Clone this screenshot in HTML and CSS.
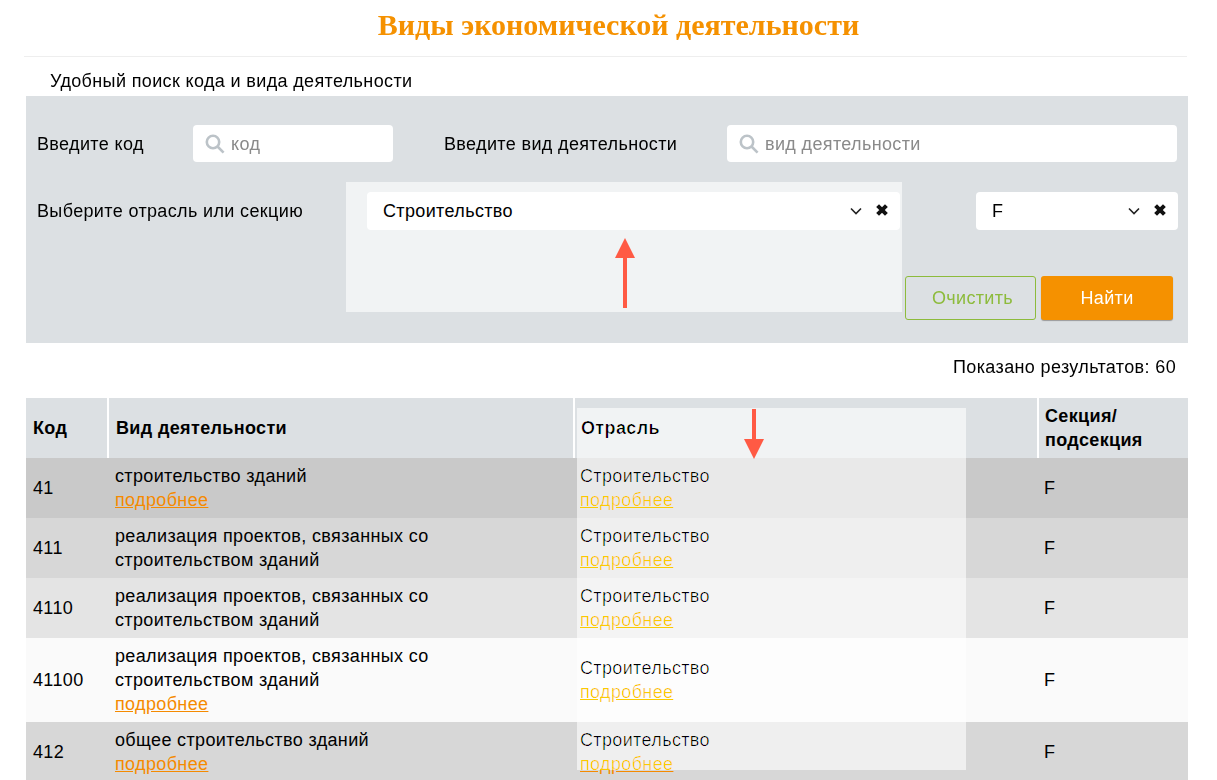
FILE: index.html
```html
<!DOCTYPE html>
<html lang="ru">

<head>
    <meta charset="UTF-8">
    <meta name="viewport" content="width=device-width, initial-scale=1.0">
    <title>Виды экономической деятельности</title>
    <link rel="stylesheet" href="styles.css">
</head>

<body>
    <div class="page">
        <h1>Виды экономической деятельности</h1>
        <hr>
        <p class="intro">Удобный поиск кода и вида деятельности</p>

        <div class="search">
            <div class="search-row">
                <label class="label label-code">Введите код</label>
                <div class="field field-code">
                    <svg class="icon-search" viewBox="0 0 20 20"><circle cx="8" cy="8" r="6.2"/><path d="M12.5 12.5L18.6 18.6"/></svg>
                    <input type="text" placeholder="код">
                </div>
                <label class="label label-kind">Введите вид деятельности</label>
                <div class="field field-kind">
                    <svg class="icon-search" viewBox="0 0 20 20"><circle cx="8" cy="8" r="6.2"/><path d="M12.5 12.5L18.6 18.6"/></svg>
                    <input type="text" placeholder="вид деятельности">
                </div>
            </div>

            <div class="search-row select-row">
                <label class="label label-branch">Выберите отрасль или секцию</label>
                <div class="select select-branch">
                    <span class="select-value">Строительство</span>
                    <svg class="icon-chevron" viewBox="0 0 12 8"><path d="M1 1.5L6 6.5L11 1.5"/></svg>
                    <svg class="icon-clear" viewBox="0 0 14 14"><path d="M2.6 2.6L11.4 11.4M11.4 2.6L2.6 11.4"/></svg>
                </div>
                <div class="select select-section">
                    <span class="select-value">F</span>
                    <svg class="icon-chevron" viewBox="0 0 12 8"><path d="M1 1.5L6 6.5L11 1.5"/></svg>
                    <svg class="icon-clear" viewBox="0 0 14 14"><path d="M2.6 2.6L11.4 11.4M11.4 2.6L2.6 11.4"/></svg>
                </div>
            </div>

            <div class="buttons">
                <button class="btn btn-clear">Очистить</button>
                <button class="btn btn-find">Найти</button>
            </div>

            <!-- annotation over the screenshot -->
            <div class="spot spot-search"></div>
            <svg class="arrow arrow-up" viewBox="0 0 20 70"><path d="M10 70V20"/><polygon points="10,0 20,20 0,20"/></svg>
        </div>

        <p class="results">Показано результатов: 60</p>

        <div class="table-wrap">
            <table>
                <colgroup>
                    <col class="col-code">
                    <col class="col-kind">
                    <col class="col-branch">
                    <col class="col-section">
                </colgroup>
                <thead>
                    <tr>
                        <th>Код</th>
                        <th class="th-kind">Вид деятельности</th>
                        <th class="th-branch">Отрасль</th>
                        <th class="th-section">Секция/<br>подсекция</th>
                    </tr>
                </thead>
                <tbody>
                    <tr class="row-a">
                        <td>41</td>
                        <td>строительство зданий<br><a href="#">подробнее</a></td>
                        <td>Строительство<br><a href="#">подробнее</a></td>
                        <td>F</td>
                    </tr>
                    <tr class="row-b">
                        <td>411</td>
                        <td>реализация проектов, связанных со<br>строительством зданий</td>
                        <td>Строительство<br><a href="#">подробнее</a></td>
                        <td>F</td>
                    </tr>
                    <tr class="row-c">
                        <td>4110</td>
                        <td>реализация проектов, связанных со<br>строительством зданий</td>
                        <td>Строительство<br><a href="#">подробнее</a></td>
                        <td>F</td>
                    </tr>
                    <tr class="row-d">
                        <td>41100</td>
                        <td>реализация проектов, связанных со<br>строительством зданий<br><a href="#">подробнее</a></td>
                        <td>Строительство<br><a href="#">подробнее</a></td>
                        <td>F</td>
                    </tr>
                    <tr class="row-b">
                        <td>412</td>
                        <td>общее строительство зданий<br><a href="#">подробнее</a></td>
                        <td>Строительство<br><a href="#">подробнее</a></td>
                        <td>F</td>
                    </tr>
                </tbody>
            </table>

            <div class="spot spot-table"></div>
            <svg class="arrow arrow-down" viewBox="0 0 20 50"><path d="M10 0V30"/><polygon points="10,50 20,30 0,30"/></svg>
        </div>
    </div>
</body>

</html>
```

FILE: styles.css
```css
html,
body {
    margin: 0;
    height: 780px;
    overflow: hidden;
    background: white;
}

body {
    font-family: "Liberation Sans", Arial, sans-serif;
    font-size: 18px;
    line-height: 24px;
    letter-spacing: 0.36px;
    color: black;
}

.page {
    width: 1162px;
    margin-left: 26px;
}

h1 {
    margin: 0;
    height: 56px;
    padding-left: 23px;
    box-sizing: border-box;
    font-family: "Liberation Serif", "Times New Roman", serif;
    font-size: 30px;
    line-height: 50px;
    font-weight: bold;
    letter-spacing: 0;
    text-align: center;
    color: #f59100;
}

hr {
    height: 1px;
    margin: 0 1px 0 -2px;
    border: 0;
    background: #eeeeee;
}

.intro {
    margin: 0;
    height: 39px;
    padding: 12px 0 0 24px;
    box-sizing: border-box;
}

/* search panel */
.search {
    position: relative;
    height: 247px;
    padding: 29px 10px 0 11px;
    box-sizing: border-box;
    background: #dce0e3;
}

.search-row {
    display: flex;
    align-items: center;
}

.select-row {
    margin-top: 30px;
    align-items: flex-start;
}

.label {
    display: block;
}

.label-code {
    width: 156px;
}

.label-kind {
    width: 283px;
    margin-left: 51px;
}

.label-branch {
    width: 330px;
    margin-top: 7px;
}

.field {
    display: flex;
    align-items: center;
    height: 37px;
    padding-left: 12px;
    box-sizing: border-box;
    background: white;
    border-radius: 4px;
}

.field-code {
    width: 200px;
}

.field-kind {
    width: 450px;
}

.field input {
    flex: 1;
    min-width: 0;
    border: 0;
    padding: 0;
    margin-left: 6px;
    outline: 0;
    background: none;
    font: inherit;
    letter-spacing: inherit;
}

.field input::placeholder {
    color: #8a8a8a;
    opacity: 1;
}

.icon-search {
    width: 20px;
    height: 20px;
    fill: none;
    stroke: #bcc3c8;
    stroke-width: 2.6;
}

.select {
    display: flex;
    align-items: center;
    height: 38px;
    box-sizing: border-box;
    background: white;
    border-radius: 4px;
}

.select-branch {
    width: 533px;
    padding-left: 16px;
    position: relative;
    z-index: 1;
}

.select-section {
    width: 202px;
    margin-left: 76px;
    padding-left: 16px;
}

.select-value {
    flex: 1;
}

.icon-chevron {
    width: 12px;
    height: 8px;
    fill: none;
    stroke: #222;
    stroke-width: 1.6;
}

.icon-clear {
    width: 14px;
    height: 14px;
    margin: -2px 11px 0 13px;
    fill: none;
    stroke: #111;
    stroke-width: 4;
}

.buttons {
    display: flex;
    justify-content: flex-end;
    gap: 5px;
    margin-top: 46px;
    padding-right: 5px;
}

.btn {
    width: 132px;
    height: 44px;
    border-radius: 3px;
    font: inherit;
    letter-spacing: inherit;
    box-sizing: border-box;
}

.btn-clear {
    width: 131px;
    padding-left: 10px;
    border: 1px solid #8dbb3c;
    background: transparent;
    color: #8dbb3c;
}

.btn-find {
    border: 0;
    background: #f59100;
    color: white;
    box-shadow: 0 1px 1px #9a9a9a;
}

/* annotation layer: gamma-like lightening of whatever lies below */
.spot::before,
.spot::after {
    content: "";
    position: absolute;
    inset: 0;
    background: white;
    mix-blend-mode: soft-light;
}

.spot::after {
    opacity: 0.5;
}

.spot {
    position: absolute;
    pointer-events: none;
}

.spot-search {
    left: 320px;
    top: 86px;
    width: 556px;
    height: 130px;
}

.spot-table {
    left: 551px;
    top: 10px;
    width: 389px;
    height: 362px;
}

.arrow {
    position: absolute;
    fill: #ff5a44;
    stroke: none;
}

.arrow path {
    stroke: #ff5a44;
    stroke-width: 4;
}

.arrow-up {
    left: 589px;
    top: 142px;
    width: 20px;
    height: 70px;
}

.arrow-down {
    left: 718px;
    top: 11px;
    width: 20px;
    height: 50px;
}

.results {
    margin: 0;
    height: 55px;
    padding: 12px 12px 0 0;
    box-sizing: border-box;
    text-align: right;
}

/* table */
.table-wrap {
    position: relative;
}

table {
    width: 1162px;
    table-layout: fixed;
    border-collapse: collapse;
}

.col-code {
    width: 82px;
}

.col-kind {
    width: 466px;
}

.col-branch {
    width: 464px;
}

.col-section {
    width: 150px;
}

th {
    height: 60px;
    padding: 0 7px;
    box-sizing: border-box;
    background: #dce0e3;
    border-right: 2px solid white;
    text-align: left;
    color: black;
}

th:last-child {
    border-right: 0;
}

.th-kind {
    padding-left: 7px;
}

.th-branch {
    padding-left: 6px;
}

.th-section {
    padding-left: 6px;
}

td {
    padding: 6px 6px 6px 7px;
}

td:nth-child(3) {
    padding-left: 6px;
}

td:last-child {
    padding-left: 6px;
}

.row-a {
    background: #c9c9c9;
}

.row-b {
    background: #d7d7d7;
}

.row-c {
    background: #e4e4e4;
}

.row-d {
    background: #fafafa;
}

a {
    color: #f58a00;
}
```
